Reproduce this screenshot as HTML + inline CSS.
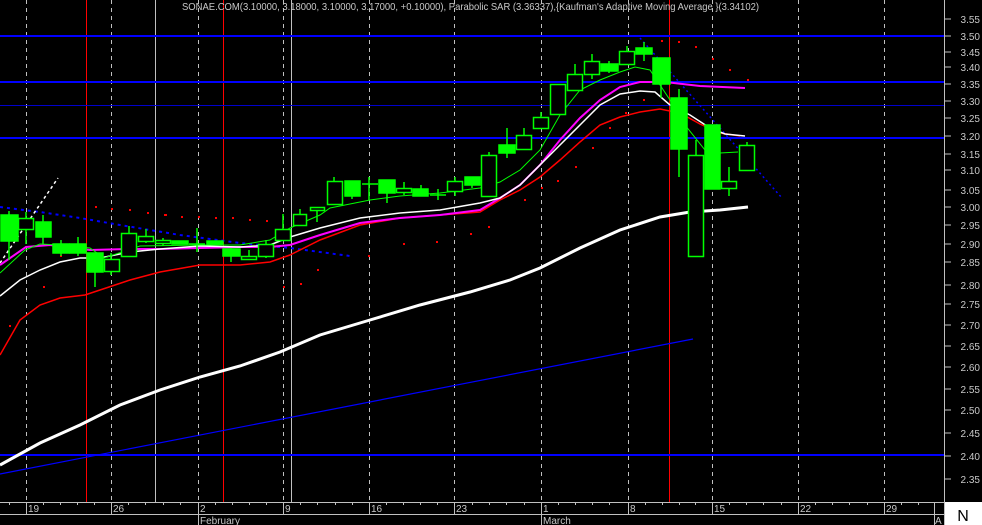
<!DOCTYPE html>
<html><head><meta charset="utf-8"><style>
html,body{margin:0;padding:0;background:#000;width:982px;height:525px;overflow:hidden}
svg{display:block}
text{font-family:"Liberation Sans",sans-serif;fill:#c8c8c8}
</style></head><body>
<svg width="982" height="525" viewBox="0 0 982 525" xmlns="http://www.w3.org/2000/svg">
<rect width="982" height="525" fill="#000"/>
<!-- vertical grid -->
<g stroke="#c0c0c0" stroke-width="1" stroke-dasharray="4,4">
<line x1="26.5" y1="0" x2="26.5" y2="502"/><line x1="111.5" y1="0" x2="111.5" y2="502"/>
<line x1="198.5" y1="0" x2="198.5" y2="502"/><line x1="283.5" y1="0" x2="283.5" y2="502"/>
<line x1="369.5" y1="0" x2="369.5" y2="502"/><line x1="454.5" y1="0" x2="454.5" y2="502"/>
<line x1="541.5" y1="0" x2="541.5" y2="502"/><line x1="628.5" y1="0" x2="628.5" y2="502"/>
<line x1="712.5" y1="0" x2="712.5" y2="502"/><line x1="798.5" y1="0" x2="798.5" y2="502"/>
<line x1="884.5" y1="0" x2="884.5" y2="502"/>
</g>
<g stroke="#c0c0c0"><line x1="155.5" y1="0" x2="155.5" y2="502"/><line x1="291.5" y1="0" x2="291.5" y2="502"/></g>
<g stroke="#ff0000"><line x1="86.5" y1="0" x2="86.5" y2="502"/><line x1="223.5" y1="0" x2="223.5" y2="502"/><line x1="669.5" y1="0" x2="669.5" y2="502"/></g>
<!-- horizontal blue lines -->
<g stroke="#0000ff" stroke-width="2"><line x1="0" y1="36" x2="944" y2="36"/><line x1="0" y1="82" x2="944" y2="82"/><line x1="0" y1="138" x2="944" y2="138"/><line x1="0" y1="455" x2="944" y2="455"/></g>
<line x1="0" y1="105.5" x2="944" y2="105.5" stroke="#0000cc" stroke-width="1"/>
<!-- thin blue trend -->
<line x1="0" y1="474" x2="693" y2="339" stroke="#0000ff" stroke-width="1.2"/>
<!-- dotted trends -->
<polyline points="0,207 40,212 80,218 120,225 180,235 240,243 290,248 350,256" fill="none" stroke="#0000ff" stroke-width="2" stroke-dasharray="3,4"/>
<line x1="640" y1="38" x2="782" y2="198" stroke="#0000ff" stroke-width="1.5" stroke-dasharray="2,3"/>
<line x1="0" y1="263" x2="58" y2="178" stroke="#fff" stroke-width="1.5" stroke-dasharray="3,3"/>
<!-- thick white MA -->
<polyline points="0,465 40,443 80,425 120,405 160,390 200,377 240,366 280,352 320,335 370,320 420,305 470,292 510,280 540,268 580,248 620,230 660,217 690,212 720,210 748,207" fill="none" stroke="#fff" stroke-width="3"/>
<!-- red MA -->
<polyline points="0,355 20,320 40,305 60,298 85,295 100,290 130,280 160,272 200,265 240,265 270,262 290,255 320,240 360,225 400,218 440,215 480,212 500,200 520,190 540,177 560,160 580,142 600,125 620,117 640,112 660,109 680,113 700,124 720,133 740,136" fill="none" stroke="#ff0000" stroke-width="1.5"/>
<!-- magenta -->
<polyline points="0,265 26,247 50,245 90,250 130,249 160,249 200,248 240,247 270,247 290,245 320,235 360,223 400,218 440,215 480,210 500,198 520,185 540,165 560,140 580,118 600,100 620,87 640,82 665,82 700,86 745,88" fill="none" stroke="#ff00ff" stroke-width="2"/>
<!-- white thin -->
<polyline points="0,296 20,280 40,270 60,262 80,258 100,258 130,252 160,249 200,246 240,247 270,245 290,237 320,228 360,218 400,213 440,210 480,203 500,198 520,185 540,165 560,145 580,125 600,105 620,94 640,91 655,92 670,105 690,115 710,128 725,134 745,136" fill="none" stroke="#fff" stroke-width="1.5"/>
<!-- green -->
<polyline points="0,273 25,250 40,244 60,245 90,248 104,258 140,246 200,245 240,245 270,240 290,228 320,215 330,208 370,200 400,196 440,193 480,188 500,182 520,170 540,150 560,115 580,90 600,80 620,72 635,67 650,70 670,100 685,125 705,150 720,153 738,152" fill="none" stroke="#00ff00" stroke-width="1"/>
<!-- SAR dots -->
<g fill="#ff0000">
<rect x="95" y="206" width="2" height="2"/><rect x="111" y="208" width="2" height="2"/><rect x="129" y="209" width="2" height="2"/><rect x="147" y="212" width="2" height="2"/><rect x="164" y="214" width="3" height="2"/><rect x="181" y="216" width="2" height="2"/><rect x="198" y="216" width="2" height="2"/><rect x="215" y="217" width="2" height="2"/><rect x="232" y="217" width="2" height="2"/><rect x="249" y="219" width="2" height="2"/><rect x="266" y="220" width="2" height="2"/>
<rect x="60" y="255" width="2" height="2"/><rect x="43" y="286" width="2" height="2"/><rect x="9" y="325" width="2" height="2"/><rect x="283" y="286" width="2" height="2"/><rect x="300" y="283" width="2" height="2"/>
<rect x="317" y="269" width="2" height="2"/><rect x="368" y="255" width="2" height="2"/><rect x="403" y="243" width="2" height="2"/><rect x="436" y="241" width="2" height="2"/><rect x="470" y="233" width="2" height="2"/><rect x="488" y="226" width="2" height="2"/><rect x="524" y="199" width="2" height="2"/><rect x="541" y="187" width="2" height="2"/><rect x="557" y="180" width="2" height="2"/><rect x="575" y="166" width="2" height="2"/><rect x="592" y="147" width="2" height="2"/><rect x="609" y="127" width="2" height="2"/><rect x="625" y="112" width="2" height="2"/><rect x="643" y="99" width="2" height="2"/>
<rect x="661" y="40" width="2" height="2"/><rect x="678" y="41" width="2" height="2"/><rect x="695" y="46" width="2" height="2"/><rect x="712" y="58" width="2" height="2"/><rect x="729" y="69" width="2" height="2"/><rect x="747" y="79" width="2" height="2"/>
</g>
<!-- candles -->
<g stroke="#00ff00" stroke-width="1.5" fill="none">
<line x1="9" y1="211" x2="9" y2="260"/><rect x="1" y="215" width="17" height="26" fill="#00ff00"/>
<line x1="26" y1="212" x2="26" y2="244"/><rect x="18.5" y="218.5" width="15" height="11" fill="#000"/>
<line x1="43" y1="215" x2="43" y2="244"/><rect x="36" y="222" width="15" height="15" fill="#00ff00"/>
<line x1="61" y1="240" x2="61" y2="256"/><rect x="53" y="244" width="16" height="9" fill="#00ff00"/>
<line x1="78" y1="237" x2="78" y2="256"/><rect x="70" y="244" width="16" height="9" fill="#00ff00"/>
<line x1="95" y1="253" x2="95" y2="287"/><rect x="87" y="253" width="16" height="19" fill="#00ff00"/>
<line x1="111" y1="253" x2="111" y2="275"/><rect x="104.5" y="259.5" width="15" height="12" fill="#000"/>
<line x1="129" y1="226" x2="129" y2="257"/><rect x="121.5" y="233.5" width="15" height="23" fill="#000"/>
<line x1="146" y1="229" x2="146" y2="243"/><rect x="138.5" y="236.5" width="15" height="5" fill="#000"/>
<line x1="163" y1="238" x2="163" y2="246"/><rect x="155.5" y="240.5" width="15" height="3" fill="#000"/>
<rect x="172" y="241" width="16" height="3" fill="#00ff00"/>
<line x1="197" y1="228" x2="197" y2="252"/><line x1="189" y1="244" x2="205" y2="244"/>
<rect x="207" y="241" width="16" height="3" fill="#00ff00"/>
<line x1="231" y1="248" x2="231" y2="262"/><rect x="223" y="249" width="17" height="7" fill="#00ff00"/>
<line x1="249" y1="250" x2="249" y2="260"/><rect x="241.5" y="256.5" width="15" height="3" fill="#000"/>
<line x1="266" y1="240" x2="266" y2="258"/><rect x="258.5" y="244.5" width="15" height="12" fill="#000"/>
<line x1="283" y1="214" x2="283" y2="240"/><rect x="275.5" y="229.5" width="15" height="11" fill="#000"/>
<line x1="300" y1="209" x2="300" y2="225"/><rect x="293.5" y="214.5" width="13" height="11" fill="#000"/>
<line x1="317" y1="207" x2="317" y2="222"/><rect x="310.5" y="207.5" width="14" height="3" fill="#000"/>
<line x1="334" y1="177" x2="334" y2="204"/><rect x="327.5" y="181.5" width="15" height="23" fill="#000"/>
<line x1="352" y1="181" x2="352" y2="199"/><rect x="345" y="181" width="15" height="15" fill="#00ff00"/>
<line x1="369" y1="177" x2="369" y2="200"/><line x1="362" y1="184" x2="378" y2="184"/>
<line x1="387" y1="180" x2="387" y2="203"/><rect x="379" y="180" width="16" height="13" fill="#00ff00"/>
<line x1="404" y1="182" x2="404" y2="195"/><rect x="396.5" y="188.5" width="15" height="4" fill="#000"/>
<line x1="421" y1="185" x2="421" y2="196"/><rect x="413" y="189" width="15" height="7" fill="#00ff00"/>
<line x1="438" y1="189" x2="438" y2="200"/><line x1="430" y1="195" x2="446" y2="195"/>
<line x1="455" y1="177" x2="455" y2="196"/><rect x="447.5" y="181.5" width="15" height="10" fill="#000"/>
<line x1="472" y1="177" x2="472" y2="188"/><rect x="465" y="177" width="15" height="8" fill="#00ff00"/>
<line x1="489" y1="152" x2="489" y2="197"/><rect x="481.5" y="155.5" width="15" height="41" fill="#000"/>
<line x1="507" y1="128" x2="507" y2="158"/><rect x="499" y="145" width="16" height="8" fill="#00ff00"/>
<line x1="524" y1="128" x2="524" y2="149"/><rect x="516.5" y="135.5" width="15" height="14" fill="#000"/>
<line x1="541" y1="112" x2="541" y2="128"/><rect x="533.5" y="117.5" width="15" height="11" fill="#000"/>
<rect x="550.5" y="84.5" width="15" height="30" fill="#000"/>
<line x1="575" y1="64" x2="575" y2="90"/><rect x="567.5" y="74.5" width="15" height="16" fill="#000"/>
<line x1="592" y1="54" x2="592" y2="79"/><rect x="584.5" y="61.5" width="15" height="13" fill="#000"/>
<line x1="609" y1="61" x2="609" y2="73"/><rect x="601" y="64" width="17" height="7" fill="#00ff00"/>
<line x1="627" y1="46" x2="627" y2="64"/><rect x="619.5" y="51.5" width="15" height="13" fill="#000"/>
<line x1="644" y1="42" x2="644" y2="61"/><rect x="636" y="48" width="16" height="6" fill="#00ff00"/>
<line x1="661" y1="58" x2="661" y2="98"/><rect x="653" y="58" width="17" height="26" fill="#00ff00"/>
<line x1="679" y1="89" x2="679" y2="177"/><rect x="671" y="98" width="16" height="51" fill="#00ff00"/>
<line x1="696" y1="140" x2="696" y2="256"/><rect x="688.5" y="155.5" width="15" height="101" fill="#000"/>
<line x1="712" y1="125" x2="712" y2="189"/><rect x="705" y="125" width="15" height="64" fill="#00ff00"/>
<line x1="729" y1="167" x2="729" y2="196"/><rect x="721.5" y="181.5" width="15" height="7" fill="#000"/>
<line x1="747" y1="142" x2="747" y2="170"/><rect x="739.5" y="145.5" width="15" height="25" fill="#000"/>
</g>
<!-- title -->
<text x="182" y="10" font-size="10.5" textLength="577" lengthAdjust="spacingAndGlyphs">SONAE.COM(3.10000, 3.18000, 3.10000, 3.17000, +0.10000), Parabolic SAR (3.36337),{Kaufman's Adaptive Moving Average }(3.34102)</text>
<!-- right axis -->
<rect x="945" y="0" width="37" height="502" fill="#000"/>
<line x1="944.5" y1="0" x2="944.5" y2="525" stroke="#c0c0c0"/>
<g stroke="#c0c0c0">
<path d="M945 19h6M945 36h6M945 52h6M945 67h6M945 84h6M945 101h6M945 118h6M945 136h6M945 154h6M945 170h6M945 190h6M945 207h6M945 225h6M945 244h6M945 262h6M945 285h6M945 304h6M945 325h6M945 346h6M945 367h6M945 389h6M945 410h6M945 433h6M945 456h6M945 479h6"/>
</g>
<g font-size="10" text-anchor="end">
<text x="980" y="23">3.55</text><text x="980" y="40">3.50</text><text x="980" y="56">3.45</text><text x="980" y="71">3.40</text><text x="980" y="88">3.35</text><text x="980" y="105">3.30</text><text x="980" y="122">3.25</text><text x="980" y="140">3.20</text><text x="980" y="158">3.15</text><text x="980" y="174">3.10</text><text x="980" y="194">3.05</text><text x="980" y="211">3.00</text><text x="980" y="229">2.95</text><text x="980" y="248">2.90</text><text x="980" y="266">2.85</text><text x="980" y="289">2.80</text><text x="980" y="308">2.75</text><text x="980" y="329">2.70</text><text x="980" y="350">2.65</text><text x="980" y="371">2.60</text><text x="980" y="393">2.55</text><text x="980" y="414">2.50</text><text x="980" y="437">2.45</text><text x="980" y="460">2.40</text><text x="980" y="483">2.35</text>
</g>
<!-- bottom axis -->
<rect x="0" y="502" width="944" height="23" fill="#000"/>
<line x1="0" y1="502.5" x2="944" y2="502.5" stroke="#c0c0c0"/>
<line x1="0" y1="514.5" x2="944" y2="514.5" stroke="#c0c0c0"/>
<g stroke="#c0c0c0">
<path d="M26.5 502v12M111.5 502v12M198.5 502v23M283.5 502v12M369.5 502v12M454.5 502v12M541.5 502v23M628.5 502v12M712.5 502v12M798.5 502v12M884.5 502v12M934.5 502v23"/>
<path d="M9.5 502v3M43.5 502v3M60.5 502v3M77.5 502v3M94.5 502v3M128.5 502v3M145.5 502v3M163.5 502v3M180.5 502v3M215.5 502v3M232.5 502v3M249.5 502v3M266.5 502v3M300.5 502v3M317.5 502v3M335.5 502v3M352.5 502v3M386.5 502v3M403.5 502v3M420.5 502v3M437.5 502v3M472.5 502v3M489.5 502v3M506.5 502v3M524.5 502v3M558.5 502v3M575.5 502v3M592.5 502v3M609.5 502v3M645.5 502v3M662.5 502v3M679.5 502v3M695.5 502v3M729.5 502v3M746.5 502v3M763.5 502v3M781.5 502v3M815.5 502v3M832.5 502v3M849.5 502v3M867.5 502v3M901.5 502v3M918.5 502v3"/>
</g>
<g font-size="10">
<text x="28" y="512">19</text><text x="113" y="512">26</text><text x="200" y="512">2</text><text x="285" y="512">9</text><text x="371" y="512">16</text><text x="456" y="512">23</text><text x="543" y="512">1</text><text x="630" y="512">8</text><text x="714" y="512">15</text><text x="800" y="512">22</text><text x="886" y="512">29</text>
<text x="200" y="524">February</text><text x="543" y="524">March</text><text x="935" y="524">A</text>
</g>
<rect x="945" y="502" width="37" height="23" fill="#fff"/>
<text x="963" y="521" font-size="16" text-anchor="middle" style="fill:#000">N</text>
</svg>
</body></html>
